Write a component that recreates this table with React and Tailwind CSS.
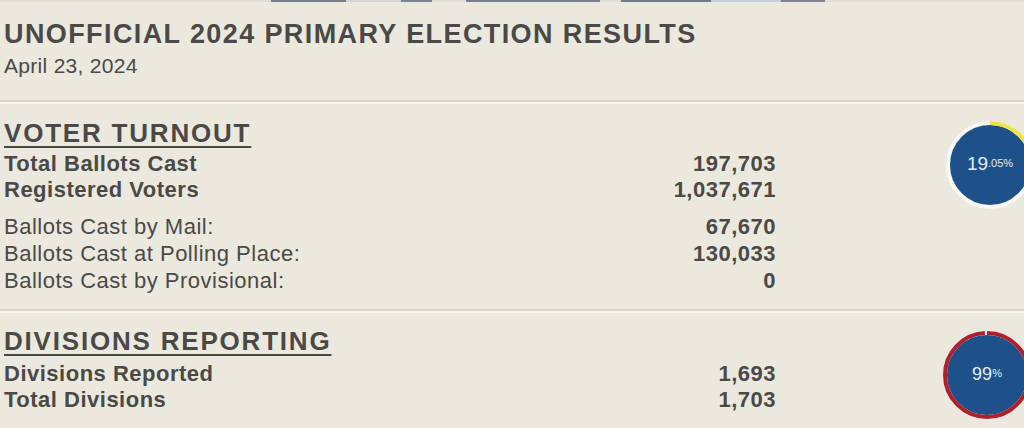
import React from 'react';

const turnout = [
  { label: 'Total Ballots Cast', value: '197,703', strong: true },
  { label: 'Registered Voters', value: '1,037,671', strong: true },
];

const ballots = [
  { label: 'Ballots Cast by Mail:', value: '67,670' },
  { label: 'Ballots Cast at Polling Place:', value: '130,033' },
  { label: 'Ballots Cast by Provisional:', value: '0' },
];

const divisions = [
  { label: 'Divisions Reported', value: '1,693' },
  { label: 'Total Divisions', value: '1,703' },
];

const CIRC = 2 * Math.PI * 42;

// ring gauge, percent drawn clockwise from the top
const Gauge = ({ pct, ring, rest, children }) => (
  <div className="relative w-[88px] h-[88px] shrink-0">
    <svg width="88" height="88" viewBox="0 0 88 88">
      <circle cx="44" cy="44" r="41" fill="#1e5189" />
      <circle cx="44" cy="44" r="42" fill="none" stroke={rest} strokeWidth="4" />
      <circle
        cx="44"
        cy="44"
        r="42"
        fill="none"
        stroke={ring}
        strokeWidth="4"
        strokeDasharray={`${(pct / 100) * CIRC} ${CIRC}`}
        transform="rotate(-90 44 44)"
      />
    </svg>
    <div className="absolute inset-0 flex items-center justify-center pb-[3px] text-[#e4edf5]">
      {children}
    </div>
  </div>
);

const Row = ({ label, value, strong, leading = 'leading-[26px]' }) => (
  <div className={`flex justify-between text-[22px] ${leading} tracking-[0.5px]`}>
    <span className={strong ? 'font-bold' : ''}>{label}</span>
    <span className="font-bold tracking-[0.5px]">{value}</span>
  </div>
);

const Divider = () => (
  <div>
    <div className="h-[2px] bg-[#d8d4cb]" />
    <div className="h-[2px] bg-[#f8f6f1]" />
  </div>
);

export default function App() {
  return (
    <div className="w-[1024px] h-[428px] overflow-hidden bg-[#ebe8de] text-[#4a4947] font-['Liberation_Sans',Arial,sans-serif]">
      {/* cut-off banner image at the very top */}
      <div className="flex h-[2px] bg-[#e0ddd6]">
        <div className="w-[271px]" />
        <div className="w-[75px] bg-[#767c86]" />
        <div className="w-[55px] bg-[#d2d4d9]" />
        <div className="w-[31px] bg-[#7e8491]" />
        <div className="w-[34px]" />
        <div className="w-[134px] bg-[#7a808c]" />
        <div className="w-[21px]" />
        <div className="w-[90px] bg-[#737985]" />
        <div className="w-[70px] bg-[#c6cdd8]" />
        <div className="w-[44px] bg-[#80858f]" />
      </div>

      <div className="pl-[4px] pt-[16px] pb-[21px]">
        <h1 className="text-[27px] leading-[32px] font-bold tracking-[1.4px]">
          UNOFFICIAL 2024 PRIMARY ELECTION RESULTS
        </h1>
        <p className="mt-[3px] text-[21px] leading-[26px] tracking-[0.3px]">April 23, 2024</p>
      </div>

      <Divider />

      <div className="flex pt-[14px] pb-[15px]">
        <div className="w-[776px] shrink-0 pl-[4px]">
          <h2 className="text-[26px] leading-[30px] font-bold tracking-[1.8px] underline decoration-2 underline-offset-[4px]">
            VOTER TURNOUT
          </h2>
          <div className="mt-[3px]">
            {turnout.map((r) => (
              <Row key={r.label} {...r} />
            ))}
          </div>
          <div className="mt-[10px]">
            {ballots.map((r) => (
              <Row key={r.label} {...r} leading="leading-[27px]" />
            ))}
          </div>
        </div>
        <div className="ml-[170px] mt-[3px]">
          <Gauge pct={19.05} ring="#efe445" rest="#f7f7f5">
            <span className="text-[19px] leading-none">19</span>
            <span className="text-[11px] leading-none">.05%</span>
          </Gauge>
        </div>
      </div>

      <Divider />

      <div className="flex pt-[13px]">
        <div className="w-[776px] shrink-0 pl-[4px]">
          <h2 className="text-[26px] leading-[30px] font-bold tracking-[1.8px] underline decoration-2 underline-offset-[4px]">
            DIVISIONS REPORTING
          </h2>
          <div className="mt-[5px]">
            {divisions.map((r) => (
              <Row key={r.label} {...r} strong />
            ))}
          </div>
        </div>
        <div className="ml-[167px] mt-[5px]">
          <Gauge pct={99} ring="#b01f2e" rest="#f4f2ee">
            <span className="text-[18px] leading-none">99</span>
            <span className="text-[11px] leading-none">%</span>
          </Gauge>
        </div>
      </div>
    </div>
  );
}
